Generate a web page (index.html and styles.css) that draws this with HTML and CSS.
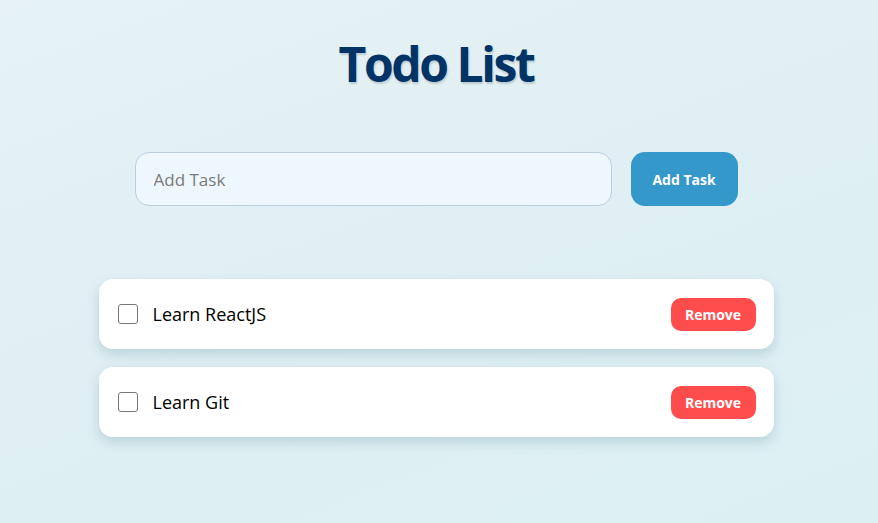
FILE: index.html
```html
<!DOCTYPE html>
<html lang="en">
<head>
<meta charset="utf-8">
<title>Todo List</title>
<link rel="stylesheet" href="styles.css">
</head>
<body>
<main class="app">
  <h1 class="title">Todo List</h1>
  <form class="add-row" onsubmit="return false">
    <input class="add-input" type="text" placeholder="Add Task">
    <button class="add-btn" type="submit">Add Task</button>
  </form>
  <ul class="list">
    <li class="item">
      <label class="item-label"><input class="check" type="checkbox"><span class="item-text">Learn ReactJS</span></label>
      <button class="remove-btn" type="button">Remove</button>
    </li>
    <li class="item">
      <label class="item-label"><input class="check" type="checkbox"><span class="item-text">Learn Git</span></label>
      <button class="remove-btn" type="button">Remove</button>
    </li>
  </ul>
</main>
</body>
</html>
```

FILE: styles.css
```css
* { box-sizing: border-box; }
html, body { height: 100%; }
body {
  margin: 0;
  padding-right: 6px;
  font-family: "Open Sans", "Noto Sans", sans-serif;
  background: linear-gradient(160deg, #e6f2f6 0%, #dfeff3 50%, #dcf0f3 100%);
  color: #000;
}
.app {
  width: 675px;
  margin: 0 auto;
  display: flex;
  flex-direction: column;
  align-items: center;
}
.title {
  margin: 36px 0 0;
  font-size: 48px;
  line-height: 56px;
  font-weight: 700;
  color: #003366;
  letter-spacing: -2.4px;
  text-shadow: 1px 2px 2px rgba(0, 0, 0, 0.16);
}
.add-row {
  margin-top: 60px;
  display: flex;
  gap: 19px;
}
.add-input {
  width: 477px;
  height: 54px;
  padding: 0 18px;
  border: 1px solid #b9d0e0;
  border-radius: 14px;
  background: #eef7fd;
  font-family: inherit;
  font-size: 17px;
  color: #333;
  outline: none;
}
.add-input::placeholder { color: #7a7a7a; }
.add-btn {
  width: 107px;
  height: 54px;
  border: none;
  border-radius: 14px;
  background: #3598cb;
  color: #fff;
  font-family: inherit;
  font-size: 14px;
  font-weight: 700;
  cursor: pointer;
}
.list {
  list-style: none;
  margin: 73px 0 0;
  padding: 0;
  width: 100%;
  display: flex;
  flex-direction: column;
  gap: 18px;
}
.item {
  height: 70px;
  padding: 0 18px 0 19px;
  background: #fff;
  border-radius: 14px;
  box-shadow: 0 5px 12px rgba(60, 110, 130, 0.22);
  display: flex;
  align-items: center;
  justify-content: space-between;
}
.item-label {
  display: flex;
  align-items: center;
  gap: 15px;
}
.check {
  appearance: none;
  -webkit-appearance: none;
  margin: 0;
  width: 20px;
  height: 20px;
  border: 1.5px solid #767676;
  border-radius: 3px;
  background: #fff;
}
.item-text {
  font-size: 18px;
  color: #000;
}
.remove-btn {
  width: 85px;
  height: 33px;
  border: none;
  border-radius: 10px;
  background: #ff4d4d;
  color: #fff;
  font-family: inherit;
  font-size: 14px;
  font-weight: 700;
  cursor: pointer;
}
```
